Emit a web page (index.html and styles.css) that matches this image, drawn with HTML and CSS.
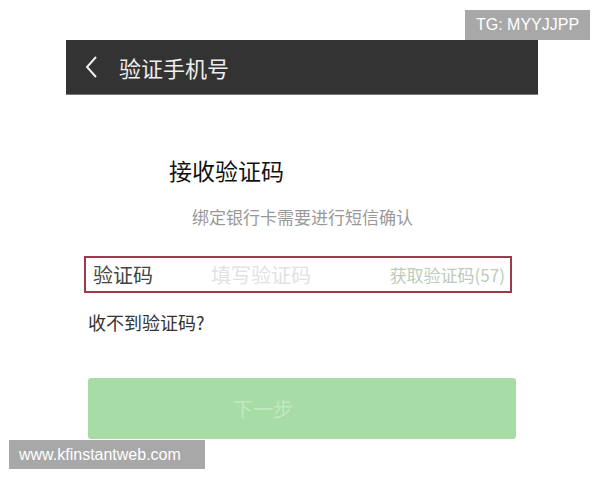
FILE: index.html
```html
<!DOCTYPE html>
<html lang="zh-CN">
<head>
	<meta charset="UTF-8">
	<title>验证手机号</title>
	<link rel="stylesheet" href="styles.css">
</head>
<body>
	<div id="page">
		<div class="topbar">
			<svg class="back" width="14" height="24" viewBox="0 0 14 24">
				<path d="M12 2 L3 12 L12 22" fill="none" stroke="#eee" stroke-width="2"/>
			</svg>
			<span class="topbar-title">验证手机号</span>
		</div>
		<div class="main">
			<h1 class="title">接收验证码</h1>
			<p class="sub">绑定银行卡需要进行短信确认</p>
			<div class="code-box">
				<span class="code-label">验证码</span>
				<span class="code-input">填写验证码</span>
				<span class="code-get">获取验证码(57)</span>
			</div>
			<p class="no-code">收不到验证码?</p>
			<div class="next-btn">下一步</div>
		</div>
	</div>
	<div class="mark mark-tg">TG: MYYJJPP</div>
	<div class="mark mark-site">www.kfinstantweb.com</div>
</body>
</html>
```

FILE: styles.css
```css
*{
	margin: 0;
	padding: 0;
}
body{
	background: #fff;
	font-family: "Noto Sans CJK SC", "Noto Sans", sans-serif;
	width: 600px;
	height: 480px;
	overflow: hidden;
	position: relative;
}
#page{
	padding-top: 40px;
}
.topbar{
	margin-left: 66px;
	width: 472px;
	height: 55px;
	background: #333;
	display: flex;
	align-items: center;
	border-bottom: 1px solid #777;
	box-sizing: border-box;
}
.back{
	margin-left: 18px;
}
.topbar-title{
	margin-left: 21px;
	color: #eee;
	font-size: 22px;
	line-height: 26px;
}
.main{
	margin-left: 84px;
	width: 432px;
}
.title{
	margin-top: 61px;
	margin-left: 85px;
	font-size: 23px;
	font-weight: normal;
	line-height: 28px;
	color: #111;
}
.sub{
	margin-top: 22px;
	margin-left: 108px;
	font-size: 17px;
	line-height: 22px;
	color: #999;
}
.code-box{
	margin-top: 28px;
	width: 428px;
	height: 37px;
	box-sizing: border-box;
	border: 2px solid #9e3a4a;
	display: flex;
	align-items: center;
	padding-left: 7px;
	padding-right: 5px;
}
.code-label{
	font-size: 20px;
	color: #444;
	width: 118px;
}
.code-input{
	font-size: 20px;
	color: #e2e2e2;
	flex: 1;
}
.code-get{
	font-size: 17px;
	color: #bccbbc;
}
.no-code{
	margin-top: 17px;
	margin-left: 4px;
	font-size: 18px;
	line-height: 24px;
	color: #333;
}
.next-btn{
	margin-top: 44px;
	margin-left: 4px;
	width: 428px;
	height: 61px;
	box-sizing: border-box;
	padding-right: 78px;
	background: #a7dca6;
	border-radius: 3px;
	color: #c2e8c0;
	font-size: 20px;
	display: flex;
	align-items: center;
	justify-content: center;
}
.mark{
	position: absolute;
	background: #a8a8a8;
	color: #fff;
	font-family: "Liberation Sans", sans-serif;
	font-size: 16px;
	display: flex;
	align-items: center;
}
.mark-tg{
	left: 465px;
	top: 10px;
	width: 125px;
	height: 30px;
	justify-content: center;
}
.mark-site{
	left: 9px;
	top: 440px;
	width: 196px;
	height: 29px;
	box-sizing: border-box;
	padding-left: 10px;
}
```
